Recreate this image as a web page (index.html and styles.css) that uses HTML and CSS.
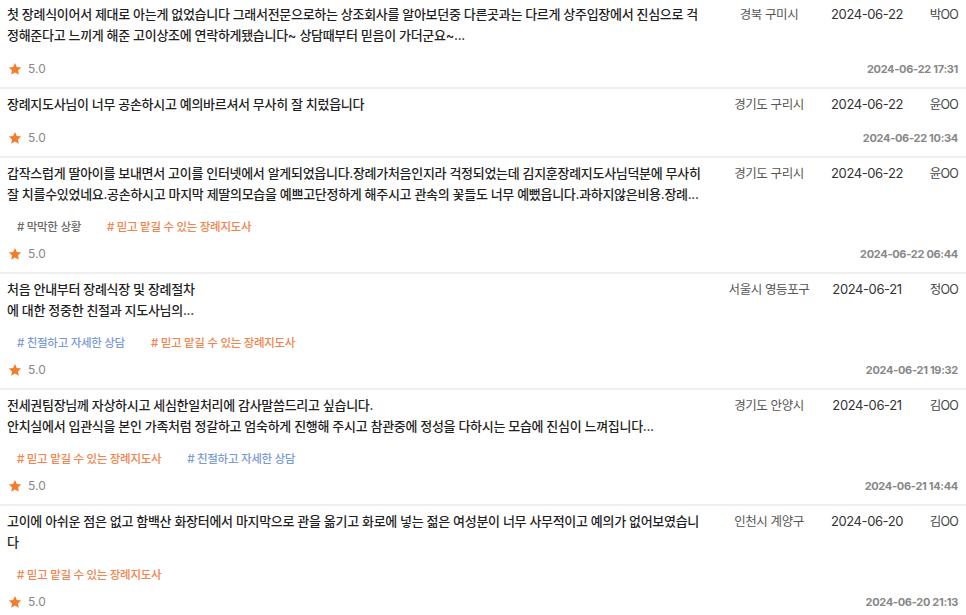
FILE: index.html
```html
<!DOCTYPE html>
<html lang="ko">
<head>
<meta charset="utf-8">
<title>후기</title>
<link rel="stylesheet" href="styles.css">
</head>
<body>
<div class="list">
  <div class="review">
    <div class="top">
      <p class="content">첫 장례식이어서 제대로 아는게 없었습니다 그래서전문으로하는 상조회사를 알아보던중 다른곳과는 다르게 상주입장에서 진심으로 걱정해준다고 느끼게 해준 고이상조에 연락하게됐습니다~ 상담때부터 믿음이 가더군요~...</p>
      <span class="region">경북 구미시</span>
      <span class="date">2024-06-22</span>
      <span class="name">박OO</span>
    </div>
    <div class="bottom">
      <span class="rating"><svg class="star" viewBox="0 0 24 24"><path d="M12 1.6l3.2 6.9 7.4.8-5.5 5.1 1.5 7.4L12 18l-6.6 3.8 1.5-7.4-5.5-5.1 7.4-.8z"/></svg><span class="score">5.0</span></span>
      <span class="written">2024-06-22 17:31</span>
    </div>
  </div>

  <div class="review">
    <div class="top">
      <p class="content">장례지도사님이 너무 공손하시고 예의바르셔서 무사히 잘 치렀읍니다</p>
      <span class="region">경기도 구리시</span>
      <span class="date">2024-06-22</span>
      <span class="name">윤OO</span>
    </div>
    <div class="bottom">
      <span class="rating"><svg class="star" viewBox="0 0 24 24"><path d="M12 1.6l3.2 6.9 7.4.8-5.5 5.1 1.5 7.4L12 18l-6.6 3.8 1.5-7.4-5.5-5.1 7.4-.8z"/></svg><span class="score">5.0</span></span>
      <span class="written">2024-06-22 10:34</span>
    </div>
  </div>

  <div class="review">
    <div class="top">
      <p class="content">갑작스럽게 딸아이를 보내면서 고이를 인터넷에서 알게되었읍니다.장례가처음인지라 걱정되었는데 김지훈장례지도사님덕분에 무사히 잘 치를수있었네요.공손하시고 마지막 제딸의모습을 예쁘고단정하게 해주시고 관속의 꽃들도 너무 예뻤읍니다.과하지않은비용.장례...</p>
      <span class="region">경기도 구리시</span>
      <span class="date">2024-06-22</span>
      <span class="name">윤OO</span>
    </div>
    <div class="tags">
      <span class="tag gray"># 막막한 상황</span>
      <span class="tag orange"># 믿고 맡길 수 있는 장례지도사</span>
    </div>
    <div class="bottom">
      <span class="rating"><svg class="star" viewBox="0 0 24 24"><path d="M12 1.6l3.2 6.9 7.4.8-5.5 5.1 1.5 7.4L12 18l-6.6 3.8 1.5-7.4-5.5-5.1 7.4-.8z"/></svg><span class="score">5.0</span></span>
      <span class="written">2024-06-22 06:44</span>
    </div>
  </div>

  <div class="review">
    <div class="top">
      <p class="content">처음 안내부터 장례식장 및 장례절차<br>에 대한 정중한 친절과 지도사님의...</p>
      <span class="region">서울시 영등포구</span>
      <span class="date">2024-06-21</span>
      <span class="name">정OO</span>
    </div>
    <div class="tags">
      <span class="tag blue"># 친절하고 자세한 상담</span>
      <span class="tag orange"># 믿고 맡길 수 있는 장례지도사</span>
    </div>
    <div class="bottom">
      <span class="rating"><svg class="star" viewBox="0 0 24 24"><path d="M12 1.6l3.2 6.9 7.4.8-5.5 5.1 1.5 7.4L12 18l-6.6 3.8 1.5-7.4-5.5-5.1 7.4-.8z"/></svg><span class="score">5.0</span></span>
      <span class="written">2024-06-21 19:32</span>
    </div>
  </div>

  <div class="review">
    <div class="top">
      <p class="content">전세권팀장님께 자상하시고 세심한일처리에 감사말씀드리고 싶습니다.<br>안치실에서 입관식을 본인 가족처럼 정갈하고 엄숙하게 진행해 주시고 참관중에 정성을 다하시는 모습에 진심이 느껴집니다...</p>
      <span class="region">경기도 안양시</span>
      <span class="date">2024-06-21</span>
      <span class="name">김OO</span>
    </div>
    <div class="tags">
      <span class="tag orange"># 믿고 맡길 수 있는 장례지도사</span>
      <span class="tag blue"># 친절하고 자세한 상담</span>
    </div>
    <div class="bottom">
      <span class="rating"><svg class="star" viewBox="0 0 24 24"><path d="M12 1.6l3.2 6.9 7.4.8-5.5 5.1 1.5 7.4L12 18l-6.6 3.8 1.5-7.4-5.5-5.1 7.4-.8z"/></svg><span class="score">5.0</span></span>
      <span class="written">2024-06-21 14:44</span>
    </div>
  </div>

  <div class="review">
    <div class="top">
      <p class="content">고이에 아쉬운 점은 없고 함백산 화장터에서 마지막으로 관을 옮기고 화로에 넣는 젊은 여성분이 너무 사무적이고 예의가 없어보였습니다</p>
      <span class="region">인천시 계양구</span>
      <span class="date">2024-06-20</span>
      <span class="name">김OO</span>
    </div>
    <div class="tags">
      <span class="tag orange"># 믿고 맡길 수 있는 장례지도사</span>
    </div>
    <div class="bottom">
      <span class="rating"><svg class="star" viewBox="0 0 24 24"><path d="M12 1.6l3.2 6.9 7.4.8-5.5 5.1 1.5 7.4L12 18l-6.6 3.8 1.5-7.4-5.5-5.1 7.4-.8z"/></svg><span class="score">5.0</span></span>
      <span class="written">2024-06-20 21:13</span>
    </div>
  </div>
</div>
</body>
</html>
```

FILE: styles.css
```css
* { box-sizing: border-box; }
html, body { margin: 0; padding: 0; background: #fff; }
body {
  font-family: "Inter", "Noto Sans CJK KR", sans-serif;
  color: #222;
}
.list { margin-top: -1px; }
.review {
  padding: 5px 8px 8px 7px;
  border-bottom: 2px solid #efefef;
}
.top {
  display: grid;
  grid-template-columns: 1fr 110px 86px 48px;
  align-items: start;
  line-height: 21px;
}
.content {
  margin: 0;
  padding-right: 6px;
  font-size: 13px;
  font-weight: 500;
  letter-spacing: -0.3px;
  color: #1f1f1f;
}
.region {
  text-align: center;
  font-size: 12.5px;
  letter-spacing: -0.4px;
  color: #555;
}
.date {
  text-align: center;
  font-size: 13px;
  letter-spacing: -0.4px;
  color: #333;
}
.name {
  text-align: right;
  font-size: 12.5px;
  letter-spacing: -0.8px;
  color: #444;
}
.tags {
  display: flex;
  gap: 6px;
  margin-top: 12px;
  line-height: 20px;
}
.tag {
  padding: 0 10px;
  font-size: 11.5px;
  font-weight: 500;
  letter-spacing: -0.3px;
}
.tag.gray { color: #6a6a6a; }
.tag.orange { color: #f2844c; }
.tag.blue { color: #7b9bd6; }
.bottom {
  display: flex;
  justify-content: space-between;
  align-items: center;
  margin-top: 7px;
  line-height: 20px;
  height: 20px;
}
.top + .bottom { margin-top: 13px; }
.rating {
  display: flex;
  align-items: center;
  gap: 6px;
  padding-left: 1px;
}
.star {
  width: 14px;
  height: 14px;
  fill: #f47d2b;
}
.score {
  font-size: 12px;
  color: #888;
}
.written {
  font-size: 11px;
  font-weight: 700;
  letter-spacing: -0.3px;
  color: #888;
}
```
